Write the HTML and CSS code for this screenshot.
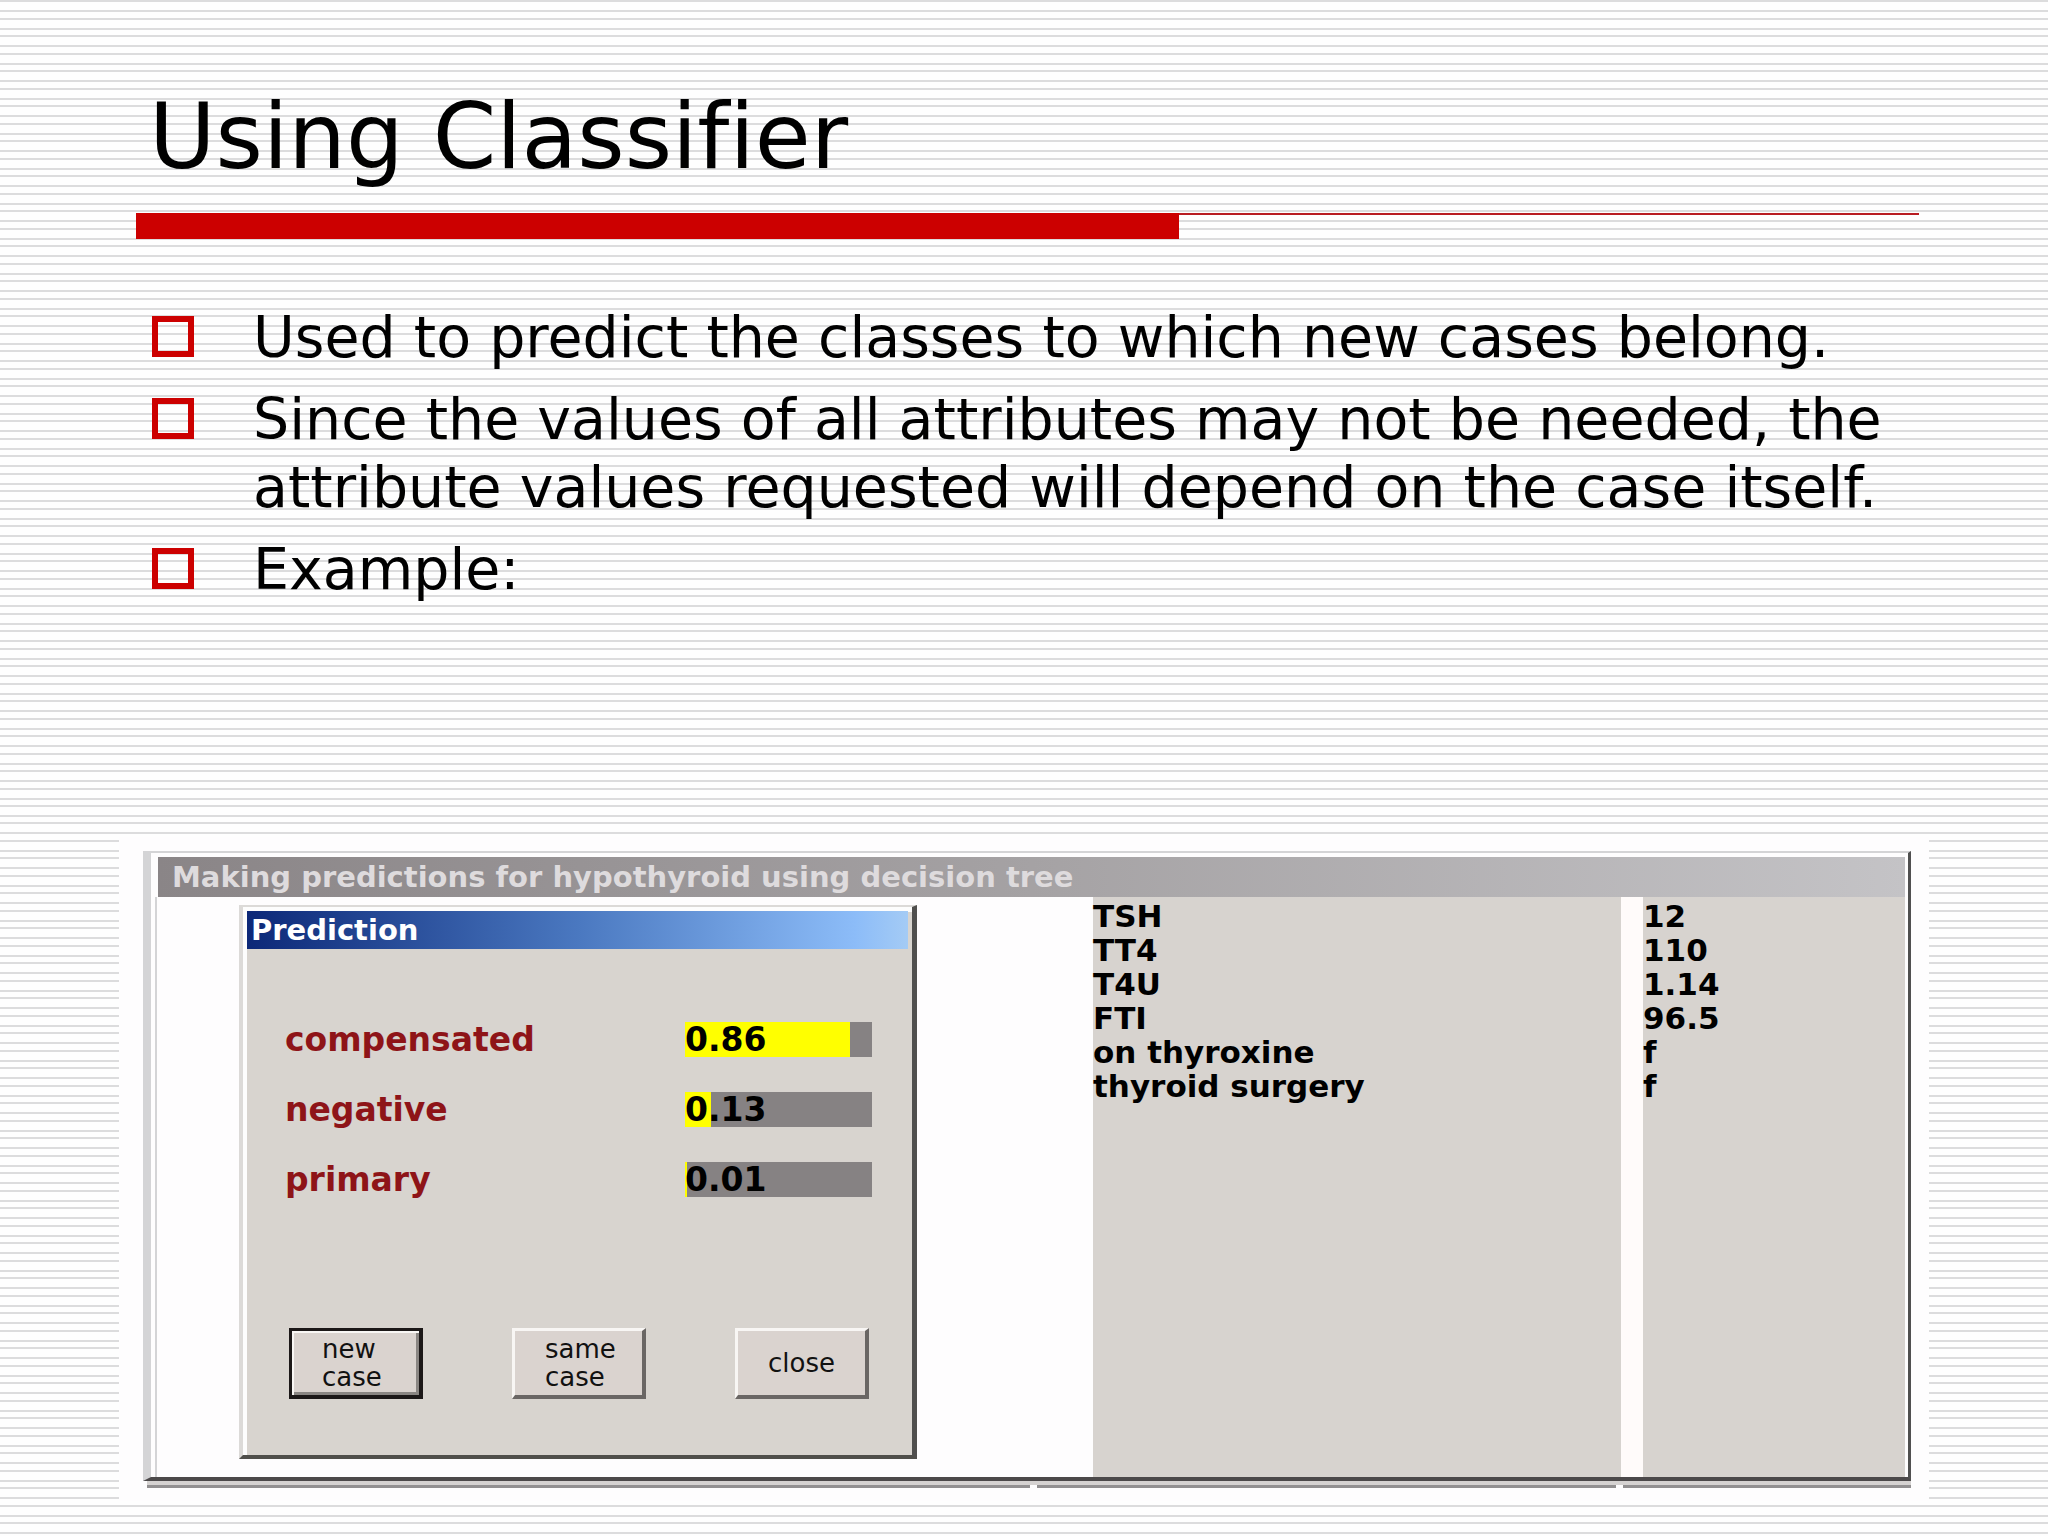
FILE: index.html
```html
<!DOCTYPE html>
<html lang="en">
<head>
<meta charset="utf-8">
<title>Using Classifier</title>
<link rel="stylesheet" href="styles.css">
</head>
<body>
<main class="slide">
  <section class="intro striped">
    <h1 class="title">Using Classifier</h1>
    <div class="rule"><span class="rule-thick"></span><span class="rule-thin"></span></div>
    <ul class="points">
      <li class="point">Used to predict the classes to which new cases belong.</li>
      <li class="point">Since the values of all attributes may not be needed, the attribute values requested will depend on the case itself.</li>
      <li class="point">Example:</li>
    </ul>
  </section>
  <section class="example striped">
    <div class="frame">
      <div class="window">
        <h2 class="window-title">Making predictions for hypothyroid using decision tree</h2>
        <div class="window-body">
          <div class="workspace">
            <form class="dialog">
              <h3 class="dialog-title">Prediction</h3>
              <div class="dialog-body">
                <div class="scores">
                  <div class="score">
                    <label class="score-name" for="compensated">compensated</label>
                    <div class="bar"><span class="fill" style="width: 88%"></span><output class="value" id="compensated">0.86</output></div>
                  </div>
                  <div class="score">
                    <label class="score-name" for="negative">negative</label>
                    <div class="bar"><span class="fill" style="width: 14%"></span><output class="value" id="negative">0.13</output></div>
                  </div>
                  <div class="score">
                    <label class="score-name" for="primary">primary</label>
                    <div class="bar"><span class="fill" style="width: 1%"></span><output class="value" id="primary">0.01</output></div>
                  </div>
                </div>
                <div class="actions">
                  <button class="button button-default" type="button"><span class="caption">new<br>case</span></button>
                  <button class="button" type="button"><span class="caption">same<br>case</span></button>
                  <button class="button" type="button"><span class="caption">close</span></button>
                </div>
              </div>
            </form>
          </div>
          <div class="attributes">
            <table class="attribute-table">
              <tbody>
                <tr><th scope="row">TSH</th><td>12</td></tr>
                <tr><th scope="row">TT4</th><td>110</td></tr>
                <tr><th scope="row">T4U</th><td>1.14</td></tr>
                <tr><th scope="row">FTI</th><td>96.5</td></tr>
                <tr><th scope="row">on thyroxine</th><td>f</td></tr>
                <tr><th scope="row">thyroid surgery</th><td>f</td></tr>
              </tbody>
            </table>
          </div>
        </div>
      </div>
      <div class="ledge"><span></span><span></span><span></span></div>
    </div>
  </section>
</main>
</body>
</html>
```
FILE: styles.css
```css
*,
*::before {
  box-sizing: border-box;
}

body {
  margin: 0;
  background: #fefefe;
  color: #000;
  font-family: "DejaVu Sans", Verdana, sans-serif;
  font-variant-ligatures: none;
}

.striped {
  background: #fefefe linear-gradient(
    #dcdcdd 2px, #fefefe 2px 10px,
    #dcdcdd 10px 12px, #fefefe 12px 18px,
    #dcdcdd 18px 20px, #fefefe 20px 28px,
    #dcdcdd 28px 30px, #fefefe 30px
  ) 0 0 / 100% 35px;
}

.intro {
  padding: 84px 129px 219px 136px;
}

.title {
  margin: 0 0 23px 13px;
  font-size: 91px;
  line-height: 106px;
  font-weight: 400;
}

.rule {
  display: grid;
  grid-template-columns: 117fr 83fr;
  height: 26px;
}

.rule-thick {
  background: #cc0000;
}

.rule-thin {
  height: 2px;
  background: #b81c22;
}

.points {
  margin: 64px 0 0 16px;
  padding: 0;
  display: flex;
  flex-direction: column;
  gap: 14px;
  list-style: none;
  font-size: 57px;
  line-height: 68px;
}

.point {
  display: grid;
  grid-template-columns: 42px 1fr;
  column-gap: 59px;
}

.point::before {
  content: "";
  height: 41px;
  margin-top: 13px;
  border: 6px solid #cc0000;
}

.example {
  padding: 15px 119px 35px;
}

.frame {
  padding: 14px 18px 13px 24px;
  background: #fefdfe;
}

.window {
  border: solid #d4d4d6;
  border-width: 2px 3px 4px 8px;
  border-right-color: #505050;
  border-bottom-color: #4c494a;
  padding: 4px 3px 0 4px;
}

.window-title {
  margin: 0 0 0 3px;
  padding-left: 14px;
  background: linear-gradient(to right, #8a8587, #a5a2a4 50%, #c4c3c6);
  color: #dedbdd;
  font-size: 29px;
  line-height: 40px;
  font-weight: 700;
}

.window-body {
  display: grid;
  grid-template-columns: 936fr 812fr;
  border-left: 2px solid #d4d4d6;
}

.workspace {
  padding: 8px 80px 18px 82px;
}

.dialog {
  width: 678px;
  border: solid #dcdad8;
  border-width: 2px 5px 4px 4px;
  border-right-color: #504f4e;
  border-bottom-color: #504f4b;
  padding: 4px 4px 0;
  background: linear-gradient(#fdfdfd 5px, transparent 5px), linear-gradient(to right, #fdfdfd 4px, #d8d4cf 4px);
}

.dialog-title {
  margin: 0;
  padding-left: 4px;
  background: linear-gradient(to right, #0c2878, #4a78c0 50%, #8cbcf8 92%, #a4cbf5);
  color: #fff;
  font-size: 29px;
  line-height: 38px;
  font-weight: 700;
}

.dialog-body {
  padding: 73px 36px 56px 38px;
}

.scores {
  display: flex;
  flex-direction: column;
  gap: 35px;
  font-size: 33px;
  line-height: 35px;
  font-weight: 700;
}

.score {
  display: grid;
  grid-template-columns: 1fr 187px;
}

.score-name {
  color: #8e1418;
}

.bar {
  display: grid;
  background: #868283;
}

.fill,
.value {
  grid-area: 1 / 1;
}

.fill {
  background: #ffff00;
}

.actions {
  display: flex;
  justify-content: space-between;
  margin: 131px 3px 0 4px;
}

.button {
  width: 134px;
  height: 71px;
  padding: 0 0 0 30px;
  border: solid #f8f6f4;
  border-width: 3px 4px 4px 3px;
  border-right-color: #6a6664;
  border-bottom-color: #6a6664;
  background: #dad3cf;
  color: #111;
  font: 26px/28px "DejaVu Sans", Verdana, sans-serif;
  text-align: left;
}

.button-default {
  border-color: #1c1818;
  box-shadow: inset 2px 2px #f8f6f4, inset -3px -3px #8a8683;
}

.caption {
  display: block;
}

.attributes {
  padding-top: 2px;
  background: linear-gradient(
    to right,
    #d7d3cf calc(100% - 284px),
    #fffbfa calc(100% - 284px) calc(100% - 262px),
    #d7d3cf calc(100% - 262px)
  );
}

.attribute-table {
  width: 100%;
  border-collapse: collapse;
  font-size: 31px;
  line-height: 34px;
  font-weight: 700;
  text-align: left;
}

.attribute-table th,
.attribute-table td {
  padding: 0;
}

.attribute-table td {
  width: 262px;
}

.ledge {
  display: grid;
  grid-template-columns: 882fr 578fr 288fr;
  column-gap: 7px;
  margin-left: 4px;
  padding-top: 4px;
  background: linear-gradient(#d5d2d1 4px, transparent 4px);
}

.ledge span {
  height: 3px;
  background: #929091;
}
```
